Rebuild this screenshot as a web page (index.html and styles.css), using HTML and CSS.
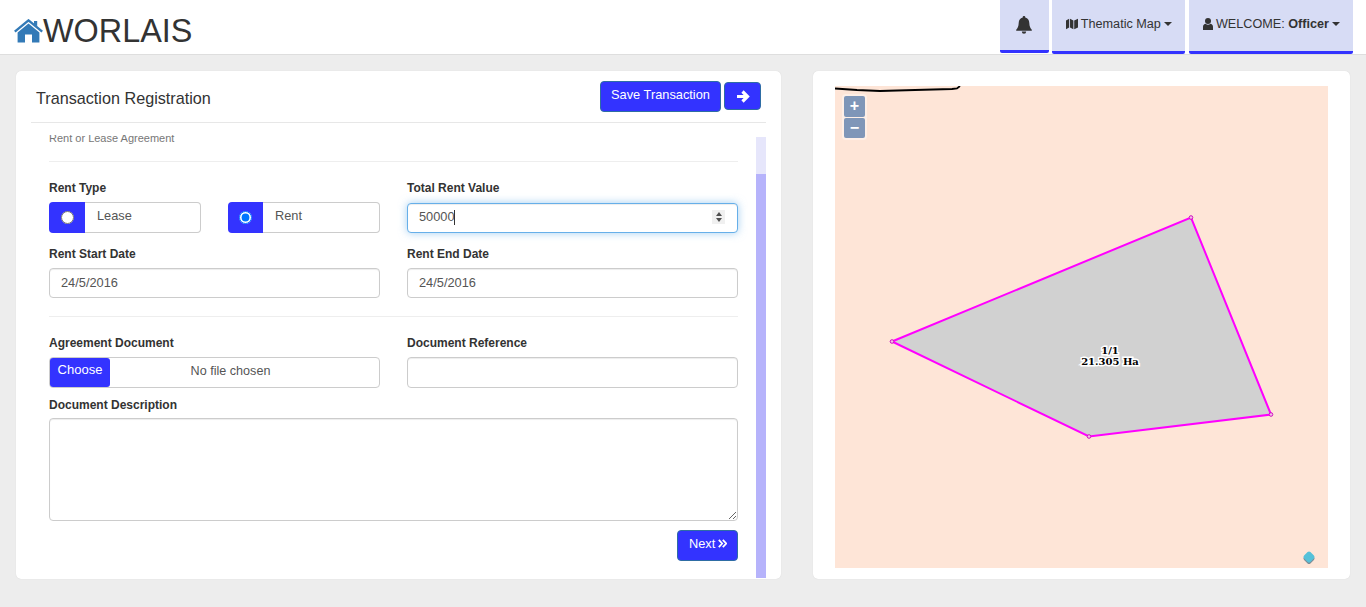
FILE: index.html
```html
<!DOCTYPE html>
<html lang="en">
<head>
    <meta charset="UTF-8">
    <meta name="viewport" content="width=device-width, initial-scale=1.0">
    <title>WORLAIS - Transaction Registration</title>
    <link rel="stylesheet" href="styles.css">
</head>
<body>
    <header class="topbar">
        <a class="brand" href="#">
            <svg class="brand-icon" viewBox="0 0 29 24">
                <path d="M20 2h3.2v5.5L20 5z"/>
                <path d="M0.8 12.6L14.5 1.4 28.2 12.6" fill="none" stroke="#337ab7" stroke-width="2.4"/>
                <path d="M3.6 13.4L14.5 4.6 25.4 13.4V23.4H18V15.4H11V23.4H3.6z"/>
            </svg>
            <span>WORLAIS</span>
        </a>
        <nav class="topnav">
            <a class="nav-item nav-bell" href="#">
                <svg class="bell-icon" viewBox="0 0 16 18">
                    <path d="M8 0a1.2 1.2 0 0 1 1.2 1.5C12 2.1 13.2 4.300 13.300 7c.1 3.500 1 5.200 2.500 6.800v1H.2v-1C1.700 12.200 2.600 10.500 2.700 7 2.800 4.300 4 2.100 6.800 1.500A1.200 1.200 0 0 1 8 0zM5.800 15.600h4.400a2.200 2.200 0 0 1-4.400 0z"/>
                </svg>
            </a>
            <a class="nav-item" href="#">
                <svg class="nav-icon" viewBox="0 0 14 13">
                    <path d="M0 2.500L3.700 .4V10.500L0 12.600zM4.700 .4L8.600 2.400V12.600L4.700 10.500zM9.600 2.400L14 .4V10.500L9.600 12.600z"/>
                </svg>
                <span>Thematic Map</span>
                <i class="caret"></i>
            </a>
            <a class="nav-item" href="#">
                <svg class="nav-icon user-icon" viewBox="0 0 10 12">
                    <circle cx="5" cy="3" r="3"/>
                    <path d="M0 12V8.800C0 7 1.300 6 2.600 5.800 3.300 6.400 4.100 6.700 5 6.700S6.700 6.400 7.400 5.800C8.700 6 10 7 10 8.800V12z"/>
                </svg>
                <span>WELCOME: <strong>Officer</strong></span>
                <i class="caret"></i>
            </a>
        </nav>
    </header>

    <main class="page">
        <section class="card form-card">
            <div class="card-head">
                <h2>Transaction Registration</h2>
                <button class="btn btn-save" type="button">Save Transaction</button>
                <button class="btn btn-go" type="button">
                    <svg class="go-icon" viewBox="0 0 14 13"><path d="M1 6.500H11.500M6.500 1.500L11.500 6.500 6.500 11.500" fill="none" stroke="#fff" stroke-width="3.200"/></svg>
                </button>
            </div>
            <div class="card-body">
                <form class="form-scroll">
                    <div class="form-inner">
                        <p class="step-note">Rent or Lease Agreement</p>
                        <hr>
                        <div class="form-grid">
                            <div class="field">
                                <label>Rent Type</label>
                                <div class="radio-pair">
                                    <div class="radio-group">
                                        <span class="radio-addon"><input type="radio" name="rentType" value="lease"></span>
                                        <span class="radio-text">Lease</span>
                                    </div>
                                    <div class="radio-group radio-group-alt">
                                        <span class="radio-addon"><input type="radio" name="rentType" value="rent" checked></span>
                                        <span class="radio-text">Rent</span>
                                    </div>
                                </div>
                            </div>
                            <div class="field">
                                <label for="rentValue">Total Rent Value</label>
                                <div class="number-wrap">
                                    <input class="input input-focus" id="rentValue" type="number" value="50000">
                                    <span class="text-caret"></span>
                                    <span class="spin-box"><i class="spin-up"></i><i class="spin-down"></i></span>
                                </div>
                            </div>
                            <div class="field">
                                <label for="startDate">Rent Start Date</label>
                                <input class="input" id="startDate" type="text" value="24/5/2016">
                            </div>
                            <div class="field">
                                <label for="endDate">Rent End Date</label>
                                <input class="input" id="endDate" type="text" value="24/5/2016">
                            </div>
                        </div>
                        <hr class="hr-mid">
                        <div class="form-grid">
                            <div class="field">
                                <label>Agreement Document</label>
                                <div class="file-box">
                                    <button class="file-btn" type="button">Choose</button>
                                    <span class="file-name">No file chosen</span>
                                </div>
                            </div>
                            <div class="field">
                                <label for="docRef">Document Reference</label>
                                <input class="input input-tall" id="docRef" type="text">
                            </div>
                            <div class="field field-wide">
                                <label class="label-tight" for="docDesc">Document Description</label>
                                <textarea class="textarea" id="docDesc"></textarea>
                            </div>
                        </div>
                        <div class="form-foot">
                            <button class="btn btn-next" type="button">
                                Next
                                <svg class="next-icon" viewBox="0 0 9 9"><path d="M.8 .8L4.200 4.500 .8 8.200M4.800 .8L8.200 4.500 4.800 8.200" fill="none" stroke="#fff" stroke-width="1.700"/></svg>
                            </button>
                        </div>
                    </div>
                </form>
                <div class="scroll-track"><div class="scroll-thumb"></div></div>
            </div>
        </section>

        <section class="card map-card">
            <div class="map">
                <svg class="map-svg" viewBox="0 0 493 482">
                    <path d="M0 2.500L22 4 45 5 80 4 117 3 122 2.500 125 0" fill="none" stroke="#000" stroke-width="1.800"/>
                    <polygon points="57,255.500 356,131.500 436,328.500 254,350.500" fill="#d1d1d1" stroke="#f0f" stroke-width="2"/>
                    <g fill="#f3c0e8" stroke="#d010c0" stroke-width="1">
                        <circle cx="57" cy="255.500" r="1.800"/>
                        <circle cx="356" cy="131.500" r="1.800"/>
                        <circle cx="436" cy="328.500" r="1.800"/>
                        <circle cx="254" cy="350.500" r="1.800"/>
                    </g>
                    <text class="parcel-label" x="275" y="267.500">1/1</text>
                    <text class="parcel-label" x="275" y="279">21.305 Ha</text>
                    <path class="marker-base" d="M474 469L477.500 472.500 474 476 470.500 472.500z"/>
                    <path class="marker-top" d="M474 467.500L477.500 471 474 474.500 470.500 471z"/>
                </svg>
                <div class="zoom-ctl">
                    <button class="zoom-btn" type="button">+</button>
                    <button class="zoom-btn" type="button">&minus;</button>
                </div>
            </div>
        </section>
    </main>
</body>
</html>
```

FILE: styles.css
```css
* {
    box-sizing: border-box;
}
body {
    margin: 0;
    font-family: "Liberation Sans", Arial, sans-serif;
    font-size: 12.8px;
    color: #333;
    background-color: #ededed;
}
.topbar {
    display: flex;
    height: 55px;
    background-color: #fff;
    border-bottom: 1px solid #dedede;
}
.brand {
    display: flex;
    align-items: flex-start;
    padding: 13px 0 0 14px;
    color: #333;
    text-decoration: none;
    font-size: 32.4px;
    line-height: 36px;
}
.brand-icon {
    width: 29px;
    height: 24px;
    margin: 6px 0 0 0;
    fill: #337ab7;
}
.topnav {
    display: flex;
    margin-left: auto;
    padding-right: 13px;
    gap: 3px;
}
.nav-item {
    display: flex;
    align-items: center;
    gap: 3px;
    height: 54px;
    padding: 0 13px 4px 14px;
    color: #333;
    font-size: 12.65px;
    text-decoration: none;
    background-color: #d7dcf5;
    border-bottom: 3px solid #3333ff;
    border-radius: 0 0 2px 2px;
}
.nav-item + .nav-item + .nav-item {
    margin-left: 1px;
}
.nav-bell {
    height: 53px;
    padding: 0 17px 0 16px;
}
.bell-icon {
    width: 16px;
    height: 18px;
    fill: #333;
}
.nav-icon {
    flex: none;
    width: 12px;
    height: 12px;
    fill: #333;
}
.user-icon {
    width: 10px;
}
.caret {
    width: 0;
    height: 0;
    border-top: 4px solid #333;
    border-left: 4px solid transparent;
    border-right: 4px solid transparent;
}
.page {
    display: flex;
    gap: 32px;
    padding: 16px;
}
.card {
    height: 508px;
    background-color: #fff;
    border-radius: 5px;
    box-shadow: 0 0 1px rgba(0, 0, 0, 0.15);
}
.form-card {
    display: flex;
    flex-direction: column;
    flex: 0 0 765px;
    padding: 0 15px;
}
.card-head {
    display: flex;
    align-items: flex-start;
    gap: 3px;
    height: 52px;
    padding: 10px 5px 0 5px;
    border-bottom: 1px solid #e7e7e7;
}
.card-head h2 {
    margin: 8px auto 0 0;
    font-size: 16.2px;
    line-height: 18px;
    font-weight: normal;
}
.btn {
    color: #fff;
    font-family: inherit;
    font-size: 12.8px;
    background-color: #3333ff;
    border: 1px solid #2e6da4;
    border-radius: 4px;
    cursor: pointer;
}
.btn-save {
    width: 121px;
    height: 31px;
    padding: 0 0 4px 0;
}
.btn-go {
    display: flex;
    align-items: center;
    justify-content: center;
    width: 37px;
    height: 28px;
    margin-top: 1px;
    padding: 0;
}
.go-icon {
    width: 14px;
    height: 13px;
}
.card-body {
    display: flex;
    flex: 1;
    min-height: 0;
}
.form-scroll {
    flex: 1;
    margin-top: 12px;
    overflow: hidden;
}
.form-inner {
    margin-top: -4px;
    padding: 0 18px;
}
.step-note {
    margin: 0 0 15px;
    font-size: 11px;
    line-height: 15px;
    color: #777;
}
hr {
    margin: 0 0 19px;
    border: 0;
    border-top: 1px solid #eee;
}
.hr-mid {
    margin-top: 18px;
}
.form-grid {
    display: grid;
    grid-template-columns: 331px 331px;
    column-gap: 27px;
    row-gap: 14px;
}
.field label {
    display: block;
    margin-bottom: 6px;
    font-size: 12px;
    line-height: 15px;
    font-weight: bold;
}
.field .label-tight {
    margin-bottom: 5px;
}
.field-wide {
    grid-column: 1 / 3;
    margin-top: -4px;
}
.input {
    display: block;
    width: 100%;
    height: 30px;
    padding: 0 11px 2px;
    font-family: inherit;
    font-size: 12.8px;
    color: #555;
    background-color: #fff;
    border: 1px solid #ccc;
    border-radius: 4px;
    box-shadow: inset 0 1px 1px rgba(0, 0, 0, 0.075);
}
.input-tall {
    height: 31px;
}
.number-wrap {
    position: relative;
    padding-top: 1px;
}
.input-focus {
    padding-bottom: 3px;
    border-color: #66afe9;
    outline: 0;
    appearance: textfield;
    box-shadow: inset 0 1px 1px rgba(0, 0, 0, 0.075), 0 0 8px rgba(102, 175, 233, 0.6);
}
.input-focus::-webkit-inner-spin-button {
    appearance: none;
}
.text-caret {
    position: absolute;
    top: 8px;
    left: 47px;
    width: 1px;
    height: 15px;
    background-color: #333;
}
.spin-box {
    position: absolute;
    top: 8px;
    right: 13px;
    display: flex;
    flex-direction: column;
    align-items: center;
    justify-content: center;
    gap: 2px;
    width: 13px;
    height: 14px;
    background-color: #f0f0f0;
}
.spin-up {
    border-bottom: 4px solid #505050;
    border-left: 3px solid transparent;
    border-right: 3px solid transparent;
}
.spin-down {
    border-top: 4px solid #505050;
    border-left: 3px solid transparent;
    border-right: 3px solid transparent;
}
.radio-pair {
    display: flex;
    gap: 27px;
}
.radio-group {
    display: flex;
    flex: 1;
    height: 31px;
}
.radio-addon {
    display: flex;
    align-items: center;
    justify-content: center;
    flex: 0 0 36px;
    background-color: #3333ff;
    border-radius: 4px 0 0 4px;
}
.radio-group-alt .radio-addon {
    flex-basis: 35px;
}
.radio-addon input {
    margin: 0;
}
.radio-text {
    flex: 1;
    padding: 5px 12px;
    font-size: 12.8px;
    font-weight: 500;
    color: #555;
    border: 1px solid #ccc;
    border-left: 0;
    border-radius: 0 4px 4px 0;
}
.file-box {
    display: flex;
    align-items: center;
    height: 31px;
    border: 1px solid #ccc;
    border-radius: 4px;
}
.file-btn {
    width: 60px;
    height: 29px;
    padding: 0 0 7px 0;
    color: #fff;
    font-family: inherit;
    font-size: 13px;
    background-color: #3333ff;
    border: 0;
    border-radius: 3px;
}
.file-name {
    flex: 1;
    margin-right: 28px;
    padding-bottom: 4px;
    text-align: center;
    font-size: 12.6px;
    color: #555;
}
.textarea {
    display: block;
    width: 100%;
    height: 103px;
    border: 1px solid #ccc;
    border-radius: 4px;
    box-shadow: inset 0 1px 1px rgba(0, 0, 0, 0.075);
}
.form-foot {
    display: flex;
    justify-content: flex-end;
    margin-top: 9px;
}
.btn-next {
    display: flex;
    align-items: center;
    gap: 3px;
    width: 61px;
    height: 31px;
    padding: 0 0 5px 11px;
}
.next-icon {
    width: 9px;
    height: 9px;
    margin-top: 1px;
}
.scroll-track {
    flex: 0 0 10px;
    margin-top: 14px;
    margin-bottom: 1px;
    padding-top: 37px;
    background-color: #e6e6fb;
}
.scroll-thumb {
    height: 100%;
    background-color: #b6b3fb;
}
.map-card {
    flex: 1;
    padding: 15px 22px 11px 22px;
}
.map {
    position: relative;
    height: 482px;
    background-color: #fee5d7;
}
.map-svg {
    display: block;
    width: 100%;
    height: 100%;
}
.parcel-label {
    font-family: "DejaVu Serif", serif;
    font-size: 10px;
    font-weight: bold;
    text-anchor: middle;
    fill: #000;
    stroke: #fff;
    stroke-width: 3px;
    paint-order: stroke;
}
.marker-base {
    fill: #7f8c96;
    stroke: #7f8c96;
    stroke-width: 4px;
    stroke-linejoin: round;
}
.marker-top {
    fill: #55c1d9;
    stroke: #55c1d9;
    stroke-width: 4px;
    stroke-linejoin: round;
}
.zoom-ctl {
    position: absolute;
    top: 8px;
    left: 7px;
    display: flex;
    flex-direction: column;
    gap: 1px;
    padding: 2px;
    background-color: rgba(255, 255, 255, 0.4);
    border-radius: 4px;
}
.zoom-btn {
    width: 21px;
    height: 20.500px;
    padding: 0;
    color: #fff;
    font-family: inherit;
    font-size: 16px;
    font-weight: bold;
    line-height: 18px;
    background-color: #7f96b8;
    border: 0;
    border-radius: 2px;
}
```
